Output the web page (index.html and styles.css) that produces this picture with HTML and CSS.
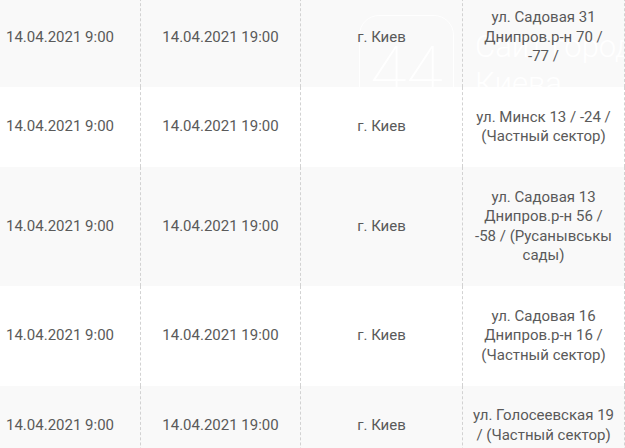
FILE: index.html
```html
<!DOCTYPE html>
<html lang="ru">
<head>
<meta charset="utf-8">
<title>Отключения</title>
<link rel="stylesheet" href="styles.css">
</head>
<body>
<div class="schedule">
  <div class="row shaded">
    <div class="cell">14.04.2021 9:00</div>
    <div class="cell">14.04.2021 19:00</div>
    <div class="cell">г. Киев</div>
    <div class="cell last">ул. Садовая 31 Днипров.р-н 70 / -77 /</div>
  </div>
  <div class="row">
    <div class="cell">14.04.2021 9:00</div>
    <div class="cell">14.04.2021 19:00</div>
    <div class="cell">г. Киев</div>
    <div class="cell last">ул. Минск 13 / -24 / (Частный сектор)</div>
  </div>
  <div class="row shaded">
    <div class="cell">14.04.2021 9:00</div>
    <div class="cell">14.04.2021 19:00</div>
    <div class="cell">г. Киев</div>
    <div class="cell last">ул. Садовая 13 Днипров.р-н 56 / -58 / (Русанывськы сады)</div>
  </div>
  <div class="row">
    <div class="cell">14.04.2021 9:00</div>
    <div class="cell">14.04.2021 19:00</div>
    <div class="cell">г. Киев</div>
    <div class="cell last">ул. Садовая 16 Днипров.р-н 16 / (Частный сектор)</div>
  </div>
  <div class="row shaded">
    <div class="cell">14.04.2021 9:00</div>
    <div class="cell">14.04.2021 19:00</div>
    <div class="cell">г. Киев</div>
    <div class="cell last">ул. Голосеевская 19 / (Частный сектор)</div>
  </div>
</div>
<div class="watermark" aria-hidden="true">
  <div class="wm-box"><span class="wm-num">44</span></div>
  <div class="wm-text">Сайт города<br>Киева</div>
</div>
</body>
</html>
```

FILE: styles.css
```css
html, body {
  margin: 0;
  padding: 0;
  background: #ffffff;
  overflow: hidden;
}

body {
  width: 625px;
  height: 448px;
  position: relative;
  font-family: Roboto, "Liberation Sans", sans-serif;
  font-size: 15px;
  color: #5a5a5a;
}

.schedule {
  width: 645px;
  margin: -12.5px 0 0 -20px;
}

.row {
  display: grid;
  grid-template-columns: 160px 160px 162px 163px;
  background: #ffffff;
}

.row.shaded {
  background: #f9f9f9;
}

.cell {
  position: relative;
  z-index: 1;
  display: flex;
  align-items: center;
  justify-content: center;
  text-align: center;
  padding: 20.5px 9px;
  line-height: 19.5px;
  border-left: 1px dashed #d2d2d2;
}

.cell:first-child {
  border-left: none;
}

.cell.last {
  border-right: 1px dashed #d2d2d2;
}

.watermark {
  position: absolute;
  z-index: 0;
  left: 359px;
  top: 15px;
  display: flex;
  gap: 21px;
  pointer-events: none;
  color: #ffffff;
}

.wm-box {
  width: 95px;
  height: 95px;
  border: 1.5px solid #ffffff;
  border-radius: 20px;
  box-sizing: border-box;
  display: flex;
  align-items: center;
  justify-content: center;
}

.wm-num {
  font-family: Roboto, sans-serif;
  font-weight: 100;
  font-size: 66px;
  line-height: 1;
  margin-top: 18px;
}

.wm-text {
  font-family: Roboto, sans-serif;
  font-weight: 300;
  font-size: 31px;
  line-height: 37px;
  margin-top: 13px;
  white-space: nowrap;
}
```
